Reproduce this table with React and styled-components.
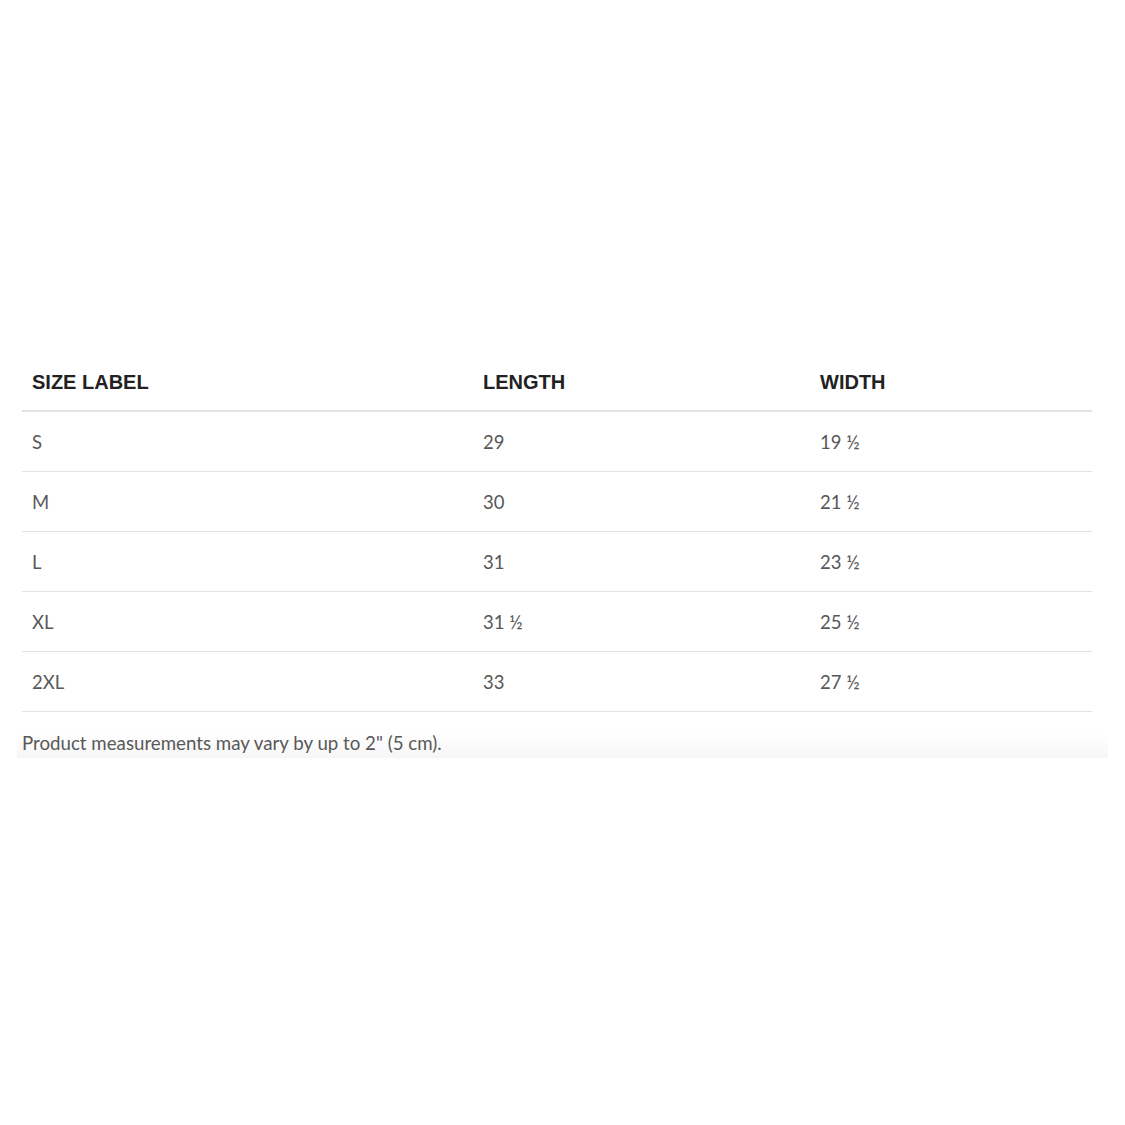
import React from "react";
import styled, { createGlobalStyle } from "styled-components";

const GlobalStyle = createGlobalStyle`
  html, body {
    margin: 0;
    padding: 0;
    background: #ffffff;
  }
`;

const Page = styled.div`
  width: 1125px;
  height: 1125px;
  display: flex;
  flex-direction: column;
  align-items: center;
  padding-top: 354px;
  box-sizing: border-box;
`;

const Card = styled.div`
  width: 1091px;
  box-sizing: border-box;
`;

const Table = styled.table`
  width: 1070px;
  margin-left: 5px;
  border-collapse: collapse;
  table-layout: fixed;
  font-family: "Lato", "Liberation Sans", sans-serif;
  background: #ffffff;
`;

const HeadCell = styled.th`
  box-sizing: border-box;
  width: ${(p) => p.w}px;
  text-align: left;
  padding: 0 10px;
  height: 57px;
  font-family: "Liberation Sans", Arial, sans-serif;
  font-weight: 700;
  font-size: 20px;
  color: #222222;
  border-bottom: 2px solid #e3e3e3;
`;

const Cell = styled.td`
  padding: 0 10px;
  height: 59px;
  font-size: 18.5px;
  color: #585858;
  border-bottom: 1px solid #e3e3e3;
`;

const Note = styled.p`
  margin: 0;
  padding: 20px 0 4px 5px;
  font-family: "Lato", "Liberation Sans", sans-serif;
  font-size: 18.7px;
  color: #585858;
  background: linear-gradient(to bottom, #ffffff 0, #ffffff 45%, #f6f6f6 100%);
`;

const rows = [
  ["S", "29", "19 ½"],
  ["M", "30", "21 ½"],
  ["L", "31", "23 ½"],
  ["XL", "31 ½", "25 ½"],
  ["2XL", "33", "27 ½"],
];

export default function App() {
  return (
    <>
      <GlobalStyle />
      <Page>
        <Card>
          <Table>
            <thead>
              <tr>
                <HeadCell w={451}>SIZE LABEL</HeadCell>
                <HeadCell w={337}>LENGTH</HeadCell>
                <HeadCell w={282}>WIDTH</HeadCell>
              </tr>
            </thead>
            <tbody>
              {rows.map((r) => (
                <tr key={r[0]}>
                  {r.map((c, i) => (
                    <Cell key={i}>{c}</Cell>
                  ))}
                </tr>
              ))}
            </tbody>
          </Table>
          <Note>Product measurements may vary by up to 2" (5 cm).</Note>
        </Card>
      </Page>
    </>
  );
}
